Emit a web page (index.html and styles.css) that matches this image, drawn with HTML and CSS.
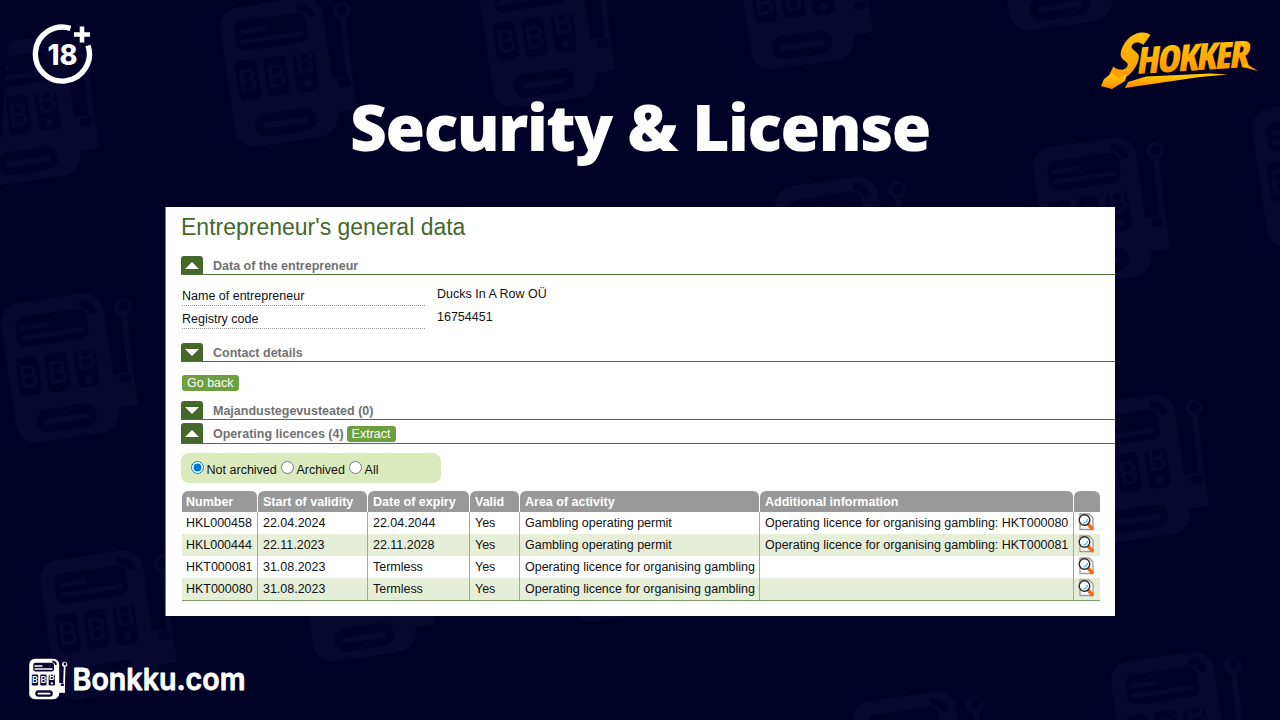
FILE: index.html
```html
<!DOCTYPE html>
<html lang="en">
<head>
  <meta charset="UTF-8">
  <title>Security &amp; License - Bonkku.com</title>
  <meta name="viewport" content="width=device-width, initial-scale=1.0">
  <link rel="stylesheet" href="styles.css">
</head>
<body>
  <!-- slot machine pattern -->
  <svg class="pattern" width="1280" height="720" viewBox="0 0 1280 720" aria-hidden="true">
    <defs>
      <g id="machine">
        <rect class="fg" x="-52" y="-70.5" width="104" height="141" rx="20"/>
        <path class="fg" d="M50 14H72V48H50Z"/>
        <path class="fg-line" stroke-width="6" d="M71 -42L69 16"/>
        <circle class="fg" cx="71" cy="-51" r="9"/>
        <circle class="hole" cx="72" cy="-52" r="5"/>
        <rect class="hole" x="57.500" y="16" width="11" height="8"/>
        <rect class="hole" x="-38" y="-56" width="72" height="30" rx="8"/>
        <path class="fg-line" stroke-width="5" d="M-32 -45H-8M-32 -35H27"/>
        <path class="hole-line" stroke-width="6.500" d="M28 -61Q40 -60 41 -49"/>
        <rect class="hole" x="-43" y="-16" width="22" height="39" rx="5"/>
        <rect class="hole" x="-14" y="-16" width="22" height="39" rx="5"/>
        <rect class="hole" x="15.500" y="-16" width="22" height="39" rx="5"/>
        <text class="reel" x="-32" y="15">B</text>
        <text class="reel" x="-3" y="15">B</text>
        <text class="reel" x="27" y="5">B</text>
        <circle class="fg" cx="26.700" cy="15.500" r="3.800"/>
        <rect class="hole" x="-31" y="39" width="61" height="23" rx="11.500"/>
        <path class="fg-line" stroke-width="6" d="M-20 51H19"/>
      </g>
      <clipPath id="edge"><path d="M10 30H160V200H-8L0 140Z"/></clipPath>
    </defs>
    <g clip-path="url(#edge)"><use href="#machine" transform="translate(21 111) rotate(-8.4)"/></g>
    <use href="#machine" transform="translate(279 72) rotate(-8.4)"/>
    <use href="#machine" transform="translate(537 33) rotate(-8.4)"/>
    <use href="#machine" transform="translate(795 -5) rotate(-8.4)"/>
    <use href="#machine" transform="translate(1053 -44) rotate(-8.4)"/>
    <use href="#machine" transform="translate(60 368) rotate(-8.4)"/>
    <use href="#machine" transform="translate(834 251) rotate(-8.4)"/>
    <use href="#machine" transform="translate(1092 212) rotate(-8.4)"/>
    <use href="#machine" transform="translate(1311 173) rotate(-8.4)"/>
    <use href="#machine" transform="translate(99 625) rotate(-8.4)"/>
    <use href="#machine" transform="translate(357 587) rotate(-8.4)"/>
    <use href="#machine" transform="translate(615 547) rotate(-8.4)"/>
    <use href="#machine" transform="translate(1131 469) rotate(-8.4)"/>
    <use href="#machine" transform="translate(912 766) rotate(-8.4)"/>
    <use href="#machine" transform="translate(1170 726) rotate(-8.4)"/>
  </svg>

  <div class="slide">
    <header class="top">
      <svg class="age" width="64" height="64" viewBox="0 0 64 64">
        <path d="M40.500 5.300A27 27 0 1 0 58 22.500"/>
        <path class="plus" d="M52 3.500V19.500M44 11.500H60"/>
        <text x="32.500" y="41.500" textLength="30" lengthAdjust="spacingAndGlyphs">18</text>
      </svg>
      <svg class="shokker" width="180" height="110" viewBox="0 -20 180 110">
        <defs>
          <linearGradient id="gold" x1="0" y1="0" x2="0" y2="1">
            <stop offset=".2" stop-color="#ffc400"/>
            <stop offset=".9" stop-color="#ff9000"/>
          </linearGradient>
        </defs>
        <text class="big" transform="translate(5 50) rotate(-4) skewX(-29)" textLength="27" lengthAdjust="spacingAndGlyphs">S</text>
        <path d="M12 43L4 49L1 56L12 59L25 51L27 44L18 48Z"/>
        <text class="rest" transform="translate(36 44) rotate(-3.500) skewX(-12)" textLength="113" lengthAdjust="spacing">HOKKER</text>
        <path d="M25 58L28 52L46 46.500L110 43.500L128 44.500L100 47Z"/>
        <path d="M145 33L158 41L143 37Z"/>
      </svg>
    </header>

    <h1>Security &amp; License</h1>

    <main class="panel">
      <h2>Entrepreneur's general data</h2>

      <div class="section">
        <span class="toggle up"></span>
        <span class="name">Data of the entrepreneur</span>
      </div>
      <div class="details">
        <div class="row"><span class="label">Name of entrepreneur</span><span class="value">Ducks In A Row OÜ</span></div>
        <div class="row"><span class="label">Registry code</span><span class="value">16754451</span></div>
      </div>

      <div class="section">
        <span class="toggle down"></span>
        <span class="name">Contact details</span>
      </div>
      <button class="btn back">Go back</button>

      <div class="section">
        <span class="toggle down"></span>
        <span class="name">Majandustegevusteated (0)</span>
      </div>
      <div class="section last">
        <span class="toggle up"></span>
        <span class="name">Operating licences (4)</span>
        <button class="btn">Extract</button>
      </div>

      <div class="filter">
        <label><input type="radio" name="state" checked><span>Not archived</span></label>
        <label><input type="radio" name="state"><span>Archived</span></label>
        <label><input type="radio" name="state"><span>All</span></label>
      </div>

      <svg width="0" height="0" class="defs">
        <symbol id="view" viewBox="0 0 16 18">
          <path d="M2 1H11L15 5V16.500H2Z" fill="#fff" stroke="#9a9a9a" stroke-width="1.300"/>
          <path d="M10 11L14 15.500" stroke="#f36a1c" stroke-width="3.400" stroke-linecap="round"/>
          <circle cx="6.500" cy="7" r="5.300" fill="#f4fbff" stroke="#2b2b2b" stroke-width="1.400"/>
          <path d="M5.500 10Q9 9.500 9.500 6" fill="none" stroke="#5bc0ea" stroke-width="1.300"/>
        </symbol>
      </svg>

      <table>
        <colgroup>
          <col class="c1"><col class="c2"><col class="c3"><col class="c4"><col class="c5"><col class="c6"><col class="c7">
        </colgroup>
        <thead>
          <tr><th>Number</th><th>Start of validity</th><th>Date of expiry</th><th>Valid</th><th>Area of activity</th><th>Additional information</th><th></th></tr>
        </thead>
        <tbody>
          <tr><td>HKL000458</td><td>22.04.2024</td><td>22.04.2044</td><td>Yes</td><td>Gambling operating permit</td><td>Operating licence for organising gambling: HKT000080</td><td><svg class="view"><use href="#view"/></svg></td></tr>
          <tr><td>HKL000444</td><td>22.11.2023</td><td>22.11.2028</td><td>Yes</td><td>Gambling operating permit</td><td>Operating licence for organising gambling: HKT000081</td><td><svg class="view"><use href="#view"/></svg></td></tr>
          <tr><td>HKT000081</td><td>31.08.2023</td><td>Termless</td><td>Yes</td><td>Operating licence for organising gambling</td><td></td><td><svg class="view"><use href="#view"/></svg></td></tr>
          <tr><td>HKT000080</td><td>31.08.2023</td><td>Termless</td><td>Yes</td><td>Operating licence for organising gambling</td><td></td><td><svg class="view"><use href="#view"/></svg></td></tr>
        </tbody>
      </table>
    </main>

    <footer>
      <svg class="brand" width="220" height="44" viewBox="0 0 220 44">
        <use href="#machine" class="logo" transform="translate(15.200 22) scale(.288)"/>
        <text x="43.500" y="33" textLength="173" lengthAdjust="spacingAndGlyphs">Bonkku.com</text>
      </svg>
    </footer>
  </div>
</body>
</html>
```
FILE: styles.css
```css
body {
  margin: 0;
  width: 1280px;
  height: 720px;
  overflow: hidden;
  background-color: #010027;
  font-family: "Liberation Sans", Arial, sans-serif;
  --fg: #080730;
  --hole: #020127;
}

.pattern {
  position: absolute;
  top: 0;
  left: 0;
}

.fg {
  fill: var(--fg);
}

.hole {
  fill: var(--hole);
}

.fg-line {
  fill: none;
  stroke: var(--fg);
  stroke-linecap: round;
}

.hole-line {
  fill: none;
  stroke: var(--hole);
}

.reel {
  fill: var(--fg);
  font: 500 32px Roboto, sans-serif;
  text-anchor: middle;
}

.slide {
  position: relative;
  height: 720px;
  display: flex;
  flex-direction: column;
}

.top {
  display: flex;
  justify-content: space-between;
  align-items: flex-start;
  height: 93px;
  box-sizing: border-box;
  padding: 23px 0 0 30px;
}

.age path {
  fill: none;
  stroke: #fff;
  stroke-width: 5.4;
}

.age .plus {
  stroke-width: 4.6;
}

.age text {
  fill: #fff;
  font: 800 28px Inter, sans-serif;
  text-anchor: middle;
}

.shokker {
  margin-top: -13px;
  overflow: visible;
}

.shokker text,
.shokker path {
  fill: url(#gold);
}

.shokker .big {
  font: 800 62px "Open Sans", sans-serif;
}

.shokker .rest {
  font: 900 37px "Open Sans", sans-serif;
  font-stretch: 75%;
}

h1 {
  margin: 0;
  height: 114px;
  line-height: 68px;
  text-align: center;
  color: #fff;
  font-family: "Open Sans", sans-serif;
  font-size: 64px;
  font-weight: 800;
  letter-spacing: -1.4px;
}

.panel {
  width: 949px;
  height: 409px;
  margin-left: 166px;
  box-sizing: border-box;
  padding-left: 15px;
  background-color: #fff;
  box-shadow: -1px 0 0 #77768a;
  font-size: 12.5px;
  color: #111;
}

h2 {
  margin: 0;
  padding-top: 6px;
  height: 43px;
  line-height: 28px;
  font-size: 23px;
  font-weight: normal;
  color: #44682a;
}

.section {
  display: flex;
  align-items: center;
  height: 18px;
  border-bottom: 1px solid #4f7138;
}

.toggle {
  align-self: stretch;
  width: 22px;
  margin-right: 10px;
  display: flex;
  align-items: center;
  justify-content: center;
  border-radius: 3px 3px 0 0;
  background-color: #44682a;
}

.toggle::before {
  content: "";
  border: 7px solid transparent;
}

.up::before {
  border-top: 0;
  border-bottom: 7px solid #fff;
}

.down::before {
  border-bottom: 0;
  border-top: 7px solid #fff;
}

.name {
  padding-top: 2px;
  font-weight: bold;
  color: #717171;
}

.details {
  padding: 8px 0 14px 1px;
}

.row {
  display: flex;
  height: 23px;
}

.label {
  width: 243px;
  box-sizing: border-box;
  border-bottom: 1px dotted #999;
  line-height: 26px;
}

.value {
  margin-left: 12px;
  line-height: 22px;
}

.btn {
  display: block;
  height: 16px;
  margin: 0;
  padding: 0 5px;
  border: none;
  border-radius: 3px;
  background-color: #6d9f40;
  color: #fff;
  font: 12.5px/16px "Liberation Sans", Arial, sans-serif;
}

.back {
  margin: 13px 0 10px 1px;
}

.last {
  height: 20px;
  margin-top: 3px;
}

.last .btn {
  margin: 1px 0 0 3px;
}

.filter {
  display: flex;
  align-items: center;
  gap: 4px;
  width: 260px;
  height: 30px;
  margin-top: 9px;
  box-sizing: border-box;
  padding-left: 10px;
  border-radius: 8px;
  background-color: #dbeabd;
}

.filter label {
  display: flex;
  align-items: center;
}

.filter input {
  width: 13px;
  height: 13px;
  margin: 0 2.6px 2px 0;
  accent-color: #0078d7;
}

.filter span {
  padding-top: 3px;
}

.defs {
  display: block;
}

table {
  width: 918px;
  margin: 8px 0 0 1px;
  table-layout: fixed;
  border-spacing: 0;
  border-bottom: 1px solid #7f9a6b;
}

.c1 { width: 76px; }
.c2 { width: 110px; }
.c3 { width: 102px; }
.c4 { width: 50px; }
.c5 { width: 240px; }
.c6 { width: 314px; }
.c7 { width: 26px; }

th,
td {
  height: 22px;
  padding: 0 0 0 5px;
  box-sizing: border-box;
  text-align: left;
  white-space: nowrap;
  line-height: 20px;
}

th {
  height: 21px;
  border-right: 1px solid #fff;
  border-radius: 6px 6px 0 0;
  background-color: #999;
  color: #fff;
}

td {
  border-right: 1px solid #a5a5a5;
  letter-spacing: -0.02px;
}

td:first-child,
th:first-child,
td:last-child {
  padding-left: 4px;
}

td:last-child,
th:last-child {
  border-right: none;
}

td:last-child {
  padding-bottom: 2px;
}

tbody tr:nth-child(even) {
  background-color: #e6eed8;
}

.view {
  display: block;
  width: 16px;
  height: 18px;
}

footer {
  padding: 41px 0 0 29px;
}

.brand {
  display: block;
  overflow: visible;
}

.logo {
  --fg: #fff;
  --hole: #0b0a30;
}

.brand text {
  fill: #fff;
  stroke: #fff;
  stroke-width: .8;
  stroke-linejoin: round;
  font: 600 30px Inter, sans-serif;
}
```
